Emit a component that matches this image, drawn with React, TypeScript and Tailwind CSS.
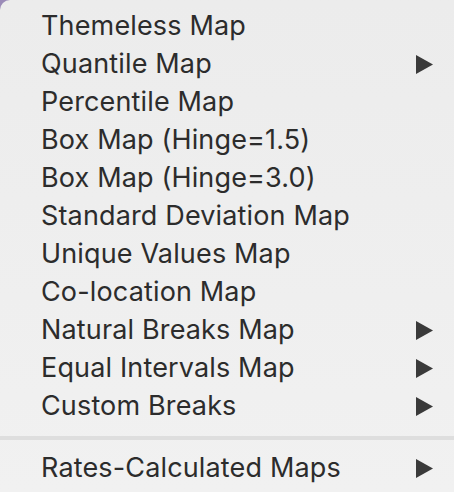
import React from "react";

type Item = { label: string; sub?: boolean };

const items: Item[] = [
  { label: "Themeless Map" },
  { label: "Quantile Map", sub: true },
  { label: "Percentile Map" },
  { label: "Box Map (Hinge=1.5)" },
  { label: "Box Map (Hinge=3.0)" },
  { label: "Standard Deviation Map" },
  { label: "Unique Values Map" },
  { label: "Co-location Map" },
  { label: "Natural Breaks Map", sub: true },
  { label: "Equal Intervals Map", sub: true },
  { label: "Custom Breaks", sub: true },
];

function Arrow() {
  return (
    <svg width="17" height="19" viewBox="0 0 17 19" className="shrink-0">
      <polygon points="0,0 17,9.5 0,19" fill="#3a3a3a" />
    </svg>
  );
}

function Row({ item }: { item: Item }) {
  return (
    <div className="flex h-[38px] items-center justify-between pl-[41px] pr-[21px]">
      <span className="text-[27px] tracking-[0.15px] text-[#2c2c2c]">{item.label}</span>
      {item.sub && <Arrow />}
    </div>
  );
}

export default function App() {
  return (
    <div className="h-[492px] w-[454px] bg-[#9b8bb8]" style={{ fontFamily: "Inter, 'Liberation Sans', sans-serif" }}>
      <div className="h-full w-full rounded-tl-[10px] bg-gradient-to-b from-[#ececec] to-[#f1f1f1] pt-[7px]">
        {items.map((it) => (
          <Row key={it.label} item={it} />
        ))}
        <div className="mt-[11px] h-[4px] bg-[#dedede]" />
        <div className="mt-[9px]">
          <Row item={{ label: "Rates-Calculated Maps", sub: true }} />
        </div>
      </div>
    </div>
  );
}
